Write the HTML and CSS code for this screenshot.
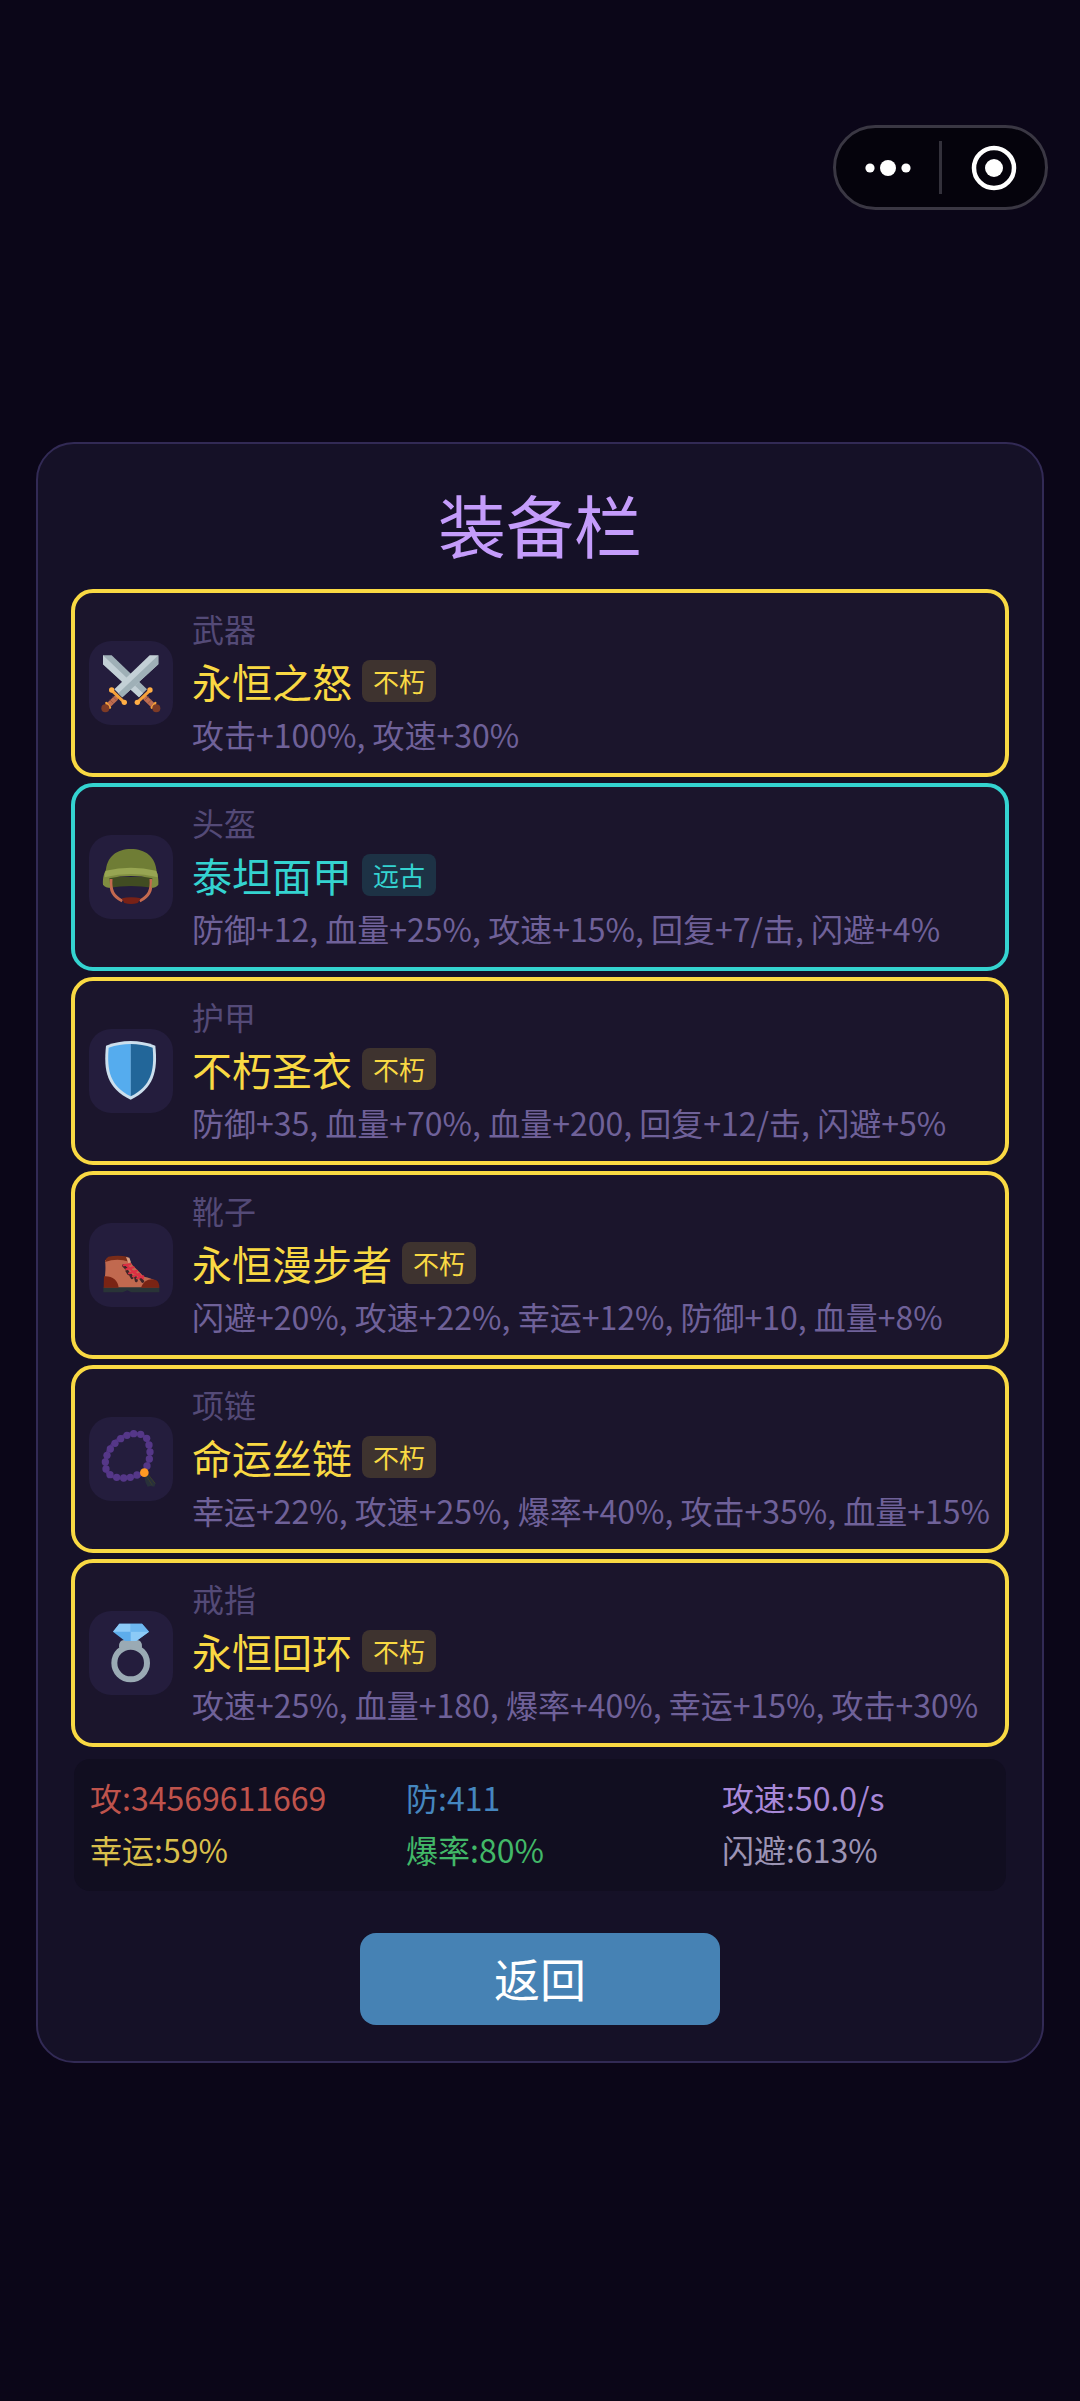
FILE: index.html
```html
<!DOCTYPE html>
<html lang="zh-CN">
<head>
    <meta charset="UTF-8">
    <meta name="viewport" content="width=device-width, initial-scale=1.0">
    <title>装备栏</title>
    <link rel="stylesheet" href="styles.css">
</head>
<body>

<header class="top-bar">
    <div class="capsule">
        <button class="capsule-btn" aria-label="更多">
            <svg width="46" height="46" viewBox="0 0 46 46" fill="#fff">
                <circle cx="5" cy="23" r="4.6"/>
                <circle cx="23" cy="23" r="8"/>
                <circle cx="41" cy="23" r="4.6"/>
            </svg>
        </button>
        <span class="capsule-line"></span>
        <button class="capsule-btn" aria-label="关闭">
            <svg width="46" height="46" viewBox="0 0 46 46">
                <circle cx="23" cy="23" r="20" fill="none" stroke="#fff" stroke-width="4.5"/>
                <circle cx="23" cy="23" r="9" fill="#fff"/>
            </svg>
        </button>
    </div>
</header>

<main class="panel">
    <h1 class="title">装备栏</h1>

    <div class="equip-list">
        <!-- Weapon -->
        <div class="equip-item immortal">
            <div class="equip-icon">
                <svg viewBox="28 35 252 252">
                    <path d="M70 78h26L202 180l-24 24L70 105z" fill="#9fb0b7"/>
                    <path d="M70 78l120 114-12 12L70 105z" fill="#c3d0d6"/>
                    <g fill="none" stroke-linecap="round">
                        <path d="M199 208l25 24" stroke="#bd6c50" stroke-width="16"/>
                        <path d="M206 202l-10 10M215 212l-10 10" stroke="#8c4a38" stroke-width="2"/>
                        <path d="M211 183l-38 36" stroke="#f5a13a" stroke-width="9"/>
                        <path d="M227 221l-11 14" stroke="#f5a13a" stroke-width="7"/>
                    </g>
                    <circle cx="211" cy="182" r="8" fill="#ffae45"/>
                    <circle cx="173" cy="219" r="8" fill="#ffae45"/>
                    <circle cx="230" cy="237" r="12" fill="#7d3b26"/>
                    <path d="M236 78h-26L104 180l24 24 108-99z" fill="#c3d0d6"/>
                    <path d="M236 78v27L128 204l-12-12z" fill="#9fb0b7"/>
                    <g fill="none" stroke-linecap="round">
                        <path d="M107 208l-25 24" stroke="#bd6c50" stroke-width="16"/>
                        <path d="M100 202l10 10M91 212l10 10" stroke="#8c4a38" stroke-width="2"/>
                        <path d="M96 183l38 36" stroke="#f5a13a" stroke-width="9"/>
                        <path d="M80 221l11 14" stroke="#f5a13a" stroke-width="7"/>
                    </g>
                    <circle cx="96" cy="182" r="8" fill="#ffae45"/>
                    <circle cx="134" cy="219" r="8" fill="#ffae45"/>
                    <circle cx="77" cy="237" r="12" fill="#7d3b26"/>
                </svg>
            </div>
            <div class="equip-info">
                <div class="equip-slot">武器</div>
                <div class="equip-name">永恒之怒 <span class="badge">不朽</span></div>
                <div class="equip-desc">攻击+100%, 攻速+30%</div>
            </div>
        </div>

        <!-- Helmet -->
        <div class="equip-item ancient">
            <div class="equip-icon">
                <svg viewBox="28 48 252 252">
                    <path d="M89 174h129v32q-64-10-129 0z" fill="#414c22"/>
                    <path d="M94 180c-3 36 7 52 34 66M214 180c3 36-7 52-34 66" fill="none" stroke="#c4694f" stroke-width="9"/>
                    <path d="M126 238q28-7 58 0l-10 14q-20 6-40 0z" fill="#782116"/>
                    <path d="M78 160C80 112 112 90 154 90s74 22 77 70z" fill="#6f7d35"/>
                    <path d="M78 155c-7 10-9 28-8 42 5 8 14 9 22 9l-3-28q65-14 129 0l-3 28c8 0 16-1 21-9 1-14-1-32-7-42-30 10-121 10-151 0z" fill="#7f8d40"/>
                    <path d="M78 155q76-18 151 0 6 8 5 20-80-20-159 0-1-12 3-20z" fill="#97a552"/>
                </svg>
            </div>
            <div class="equip-info">
                <div class="equip-slot">头盔</div>
                <div class="equip-name">泰坦面甲 <span class="badge">远古</span></div>
                <div class="equip-desc">防御+12, 血量+25%, 攻速+15%, 回复+7/击, 闪避+4%</div>
            </div>
        </div>

        <!-- Armor -->
        <div class="equip-item immortal">
            <div class="equip-icon">
                <svg viewBox="28 42 252 252">
                    <path d="M153 78q38 0 74 14c8 76-4 128-74 162C82 220 71 168 79 92q36-14 74-14z" fill="#ccdfed"/>
                    <path d="M153 87q-34 0-66 11c-6 70 5 115 66 146z" fill="#55acee"/>
                    <path d="M153 87q34 0 66 11c6 70-5 115-66 146z" fill="#226699"/>
                </svg>
            </div>
            <div class="equip-info">
                <div class="equip-slot">护甲</div>
                <div class="equip-name">不朽圣衣 <span class="badge">不朽</span></div>
                <div class="equip-desc">防御+35, 血量+70%, 血量+200, 回复+12/击, 闪避+5%</div>
            </div>
        </div>

        <!-- Boots -->
        <div class="equip-item immortal">
            <div class="equip-icon">
                <svg viewBox="28 36 252 252">
                    <path d="M71 228h168v16h-84l-12-6-14 6H71z" fill="#293437"/>
                    <path d="M76 148q36-16 71-3l12 18 34 34c30 6 44 14 44 32H74c0-30 6-50 2-81z" fill="#c1694f"/>
                    <path d="M76 153q2-12 10-16 28-6 58 0l4 15q-36-12-72 1z" fill="#7a2c18"/>
                    <path d="M139 138l10 2 5 14-8 3z" fill="#d99e82"/>
                    <path d="M73 196c24-2 42 12 44 34H72z" fill="#7a2414"/>
                    <path d="M184 230c8-22 28-30 46-22 8 6 9 14 9 22z" fill="#7a2414"/>
                    <g stroke="#3f2428" stroke-width="9" stroke-linecap="round">
                        <path d="M132 164l8 8M142 180l5 8M153 192l4 8M168 200l2 9M184 204l5 7"/>
                    </g>
                    <g fill="none" stroke="#dd2e44" stroke-width="6" stroke-linecap="round">
                        <path d="M132 163l20-3M140 175l22-6M148 187l24-8M160 196l20-8M172 202l19-6M139 162l15 13M150 172l14 15M162 181l16 15M176 190l14 12"/>
                    </g>
                </svg>
            </div>
            <div class="equip-info">
                <div class="equip-slot">靴子</div>
                <div class="equip-name">永恒漫步者 <span class="badge">不朽</span></div>
                <div class="equip-desc">闪避+20%, 攻速+22%, 幸运+12%, 防御+10, 血量+8%</div>
            </div>
        </div>

        <!-- Necklace -->
        <div class="equip-item immortal">
            <div class="equip-icon">
                <svg viewBox="28 34 252 252">
                    <path d="M190 200l14 5 24 28-4 10-12-2-8 2-6-12z" fill="#28303a"/>
                    <path d="M200 211l18 28M207 208l19 25" stroke="#3a3d2c" stroke-width="3"/>
                    <path d="M194 200c8-18 18-44 16-64-2-26-12-52-42-53-36-2-70 24-84 52-8 18-12 50-2 66 12 18 44 18 66 15 18-2 36-4 46-16z" fill="none" stroke="#4c2c79" stroke-width="8"/>
                    <g fill="#553788">
                        <circle cx="162" cy="84" r="11"/><circle cx="183" cy="86" r="11"/>
                        <circle cx="201" cy="98" r="11"/><circle cx="208" cy="118" r="11"/>
                        <circle cx="211" cy="139" r="11"/><circle cx="209" cy="160" r="11"/>
                        <circle cx="202" cy="181" r="11"/><circle cx="172" cy="208" r="11"/>
                        <circle cx="152" cy="215" r="11"/><circle cx="132" cy="217" r="11"/>
                        <circle cx="111" cy="215" r="11"/><circle cx="91" cy="207" r="11"/>
                        <circle cx="79" cy="190" r="11"/><circle cx="77" cy="169" r="11"/>
                        <circle cx="82" cy="149" r="11"/><circle cx="92" cy="130" r="11"/>
                        <circle cx="106" cy="113" r="11"/><circle cx="123" cy="99" r="11"/>
                        <circle cx="142" cy="89" r="11"/>
                    </g>
                    <circle cx="194" cy="201" r="13" fill="#ff9a22"/>
                </svg>
            </div>
            <div class="equip-info">
                <div class="equip-slot">项链</div>
                <div class="equip-name">命运丝链 <span class="badge">不朽</span></div>
                <div class="equip-desc">幸运+22%, 攻速+25%, 爆率+40%, 攻击+35%, 血量+15%</div>
            </div>
        </div>

        <!-- Ring -->
        <div class="equip-item immortal">
            <div class="equip-icon">
                <svg viewBox="28 28 252 252">
                    <circle cx="153" cy="184" r="49" fill="none" stroke="#9aaab4" stroke-width="18"/>
                    <path d="M118 135q0-20 15-20h39q15 0 15 20l-5 12q-29-18-58 0z" fill="#9aaab4"/>
                    <path d="M119 66h68l21 24-38 28h-34l-36-28z" fill="#5dadec"/>
                    <path d="M119 66h34v24h-53z" fill="#8ccaf7"/>
                    <path d="M153 66h34l21 24h-55z" fill="#6db7f0"/>
                    <path d="M153 90h55l-38 28h-17z" fill="#8ccaf7"/>
                </svg>
            </div>
            <div class="equip-info">
                <div class="equip-slot">戒指</div>
                <div class="equip-name">永恒回环 <span class="badge">不朽</span></div>
                <div class="equip-desc">攻速+25%, 血量+180, 爆率+40%, 幸运+15%, 攻击+30%</div>
            </div>
        </div>
    </div>

    <!-- Total stats -->
    <div class="stats">
        <div class="stat attack">攻:34569611669</div>
        <div class="stat defense">防:411</div>
        <div class="stat speed">攻速:50.0/s</div>
        <div class="stat luck">幸运:59%</div>
        <div class="stat drop">爆率:80%</div>
        <div class="stat dodge">闪避:613%</div>
    </div>

    <button class="back-btn">返回</button>
</main>

</body>
</html>
```
FILE: styles.css
```css
* {
    box-sizing: border-box;
}
body {
    margin: 0;
    min-height: 100vh;
    background-color: #0b0618;
    font-family: "Noto Sans CJK SC", sans-serif;
}
button {
    border: none;
    padding: 0;
    font-family: inherit;
    cursor: pointer;
}
.top-bar {
    display: flex;
    justify-content: flex-end;
    padding: 125px 32px 0;
}
.capsule {
    display: flex;
    align-items: center;
    width: 215px;
    height: 85px;
    border: 3px solid #3a3743;
    border-radius: 43px;
    background-color: #05030c;
}
.capsule-btn {
    flex: 1;
    display: flex;
    align-items: center;
    justify-content: center;
    height: 100%;
    background: none;
}
.capsule-line {
    width: 3px;
    height: 53px;
    background-color: #33313b;
}
.panel {
    margin: 232px 36px 40px;
    padding: 35px 33px 36px;
    border: 2px solid #322a55;
    border-radius: 38px;
    background-color: #151127;
}
.title {
    margin: 0 0 20px;
    font-size: 68px;
    font-weight: normal;
    line-height: 90px;
    text-align: center;
    color: #c49cfb;
}
.equip-list {
    display: flex;
    flex-direction: column;
    gap: 6px;
}
.equip-item {
    display: flex;
    align-items: center;
    gap: 19px;
    padding: 11px 14px;
    border: 4px solid currentColor;
    border-radius: 22px;
    background-color: #1b152c;
}
.equip-item.immortal {
    color: #f9d943;
}
.equip-item.ancient {
    color: #34d3d0;
}
.equip-icon {
    flex: none;
    width: 84px;
    height: 84px;
    border-radius: 22px;
    background-color: #241d3d;
}
.equip-icon svg {
    display: block;
    width: 100%;
    height: 100%;
}
.equip-info {
    padding-bottom: 4px;
    white-space: nowrap;
}
.equip-slot,
.equip-desc {
    font-size: 32px;
    line-height: 48px;
}
.equip-slot {
    color: #544a77;
}
.equip-desc {
    color: #6f6199;
}
.equip-name {
    display: flex;
    align-items: center;
    gap: 10px;
    font-size: 40px;
    line-height: 58px;
}
.badge {
    padding: 0 11px;
    border-radius: 8px;
    font-size: 26px;
    line-height: 42px;
}
.immortal .badge {
    background-color: #3e332f;
}
.ancient .badge {
    background-color: #1d3245;
}
.stats {
    display: grid;
    grid-template-columns: repeat(3, 1fr);
    column-gap: 48px;
    margin: 12px 3px 0;
    padding: 12px 16px 16px;
    border-radius: 16px;
    background-color: #110e20;
    font-size: 32px;
    line-height: 52px;
    white-space: nowrap;
}
.attack {
    color: #bf534c;
}
.defense {
    color: #4586bf;
}
.speed {
    color: #a888d8;
}
.luck {
    color: #d9bf4b;
}
.drop {
    color: #42b868;
}
.dodge {
    color: #9c94b4;
}
.back-btn {
    display: block;
    width: 360px;
    height: 92px;
    margin: 42px auto 0;
    padding-bottom: 4px;
    border-radius: 16px;
    background-color: #4682b4;
    font-size: 46px;
    color: #fff;
}
```
